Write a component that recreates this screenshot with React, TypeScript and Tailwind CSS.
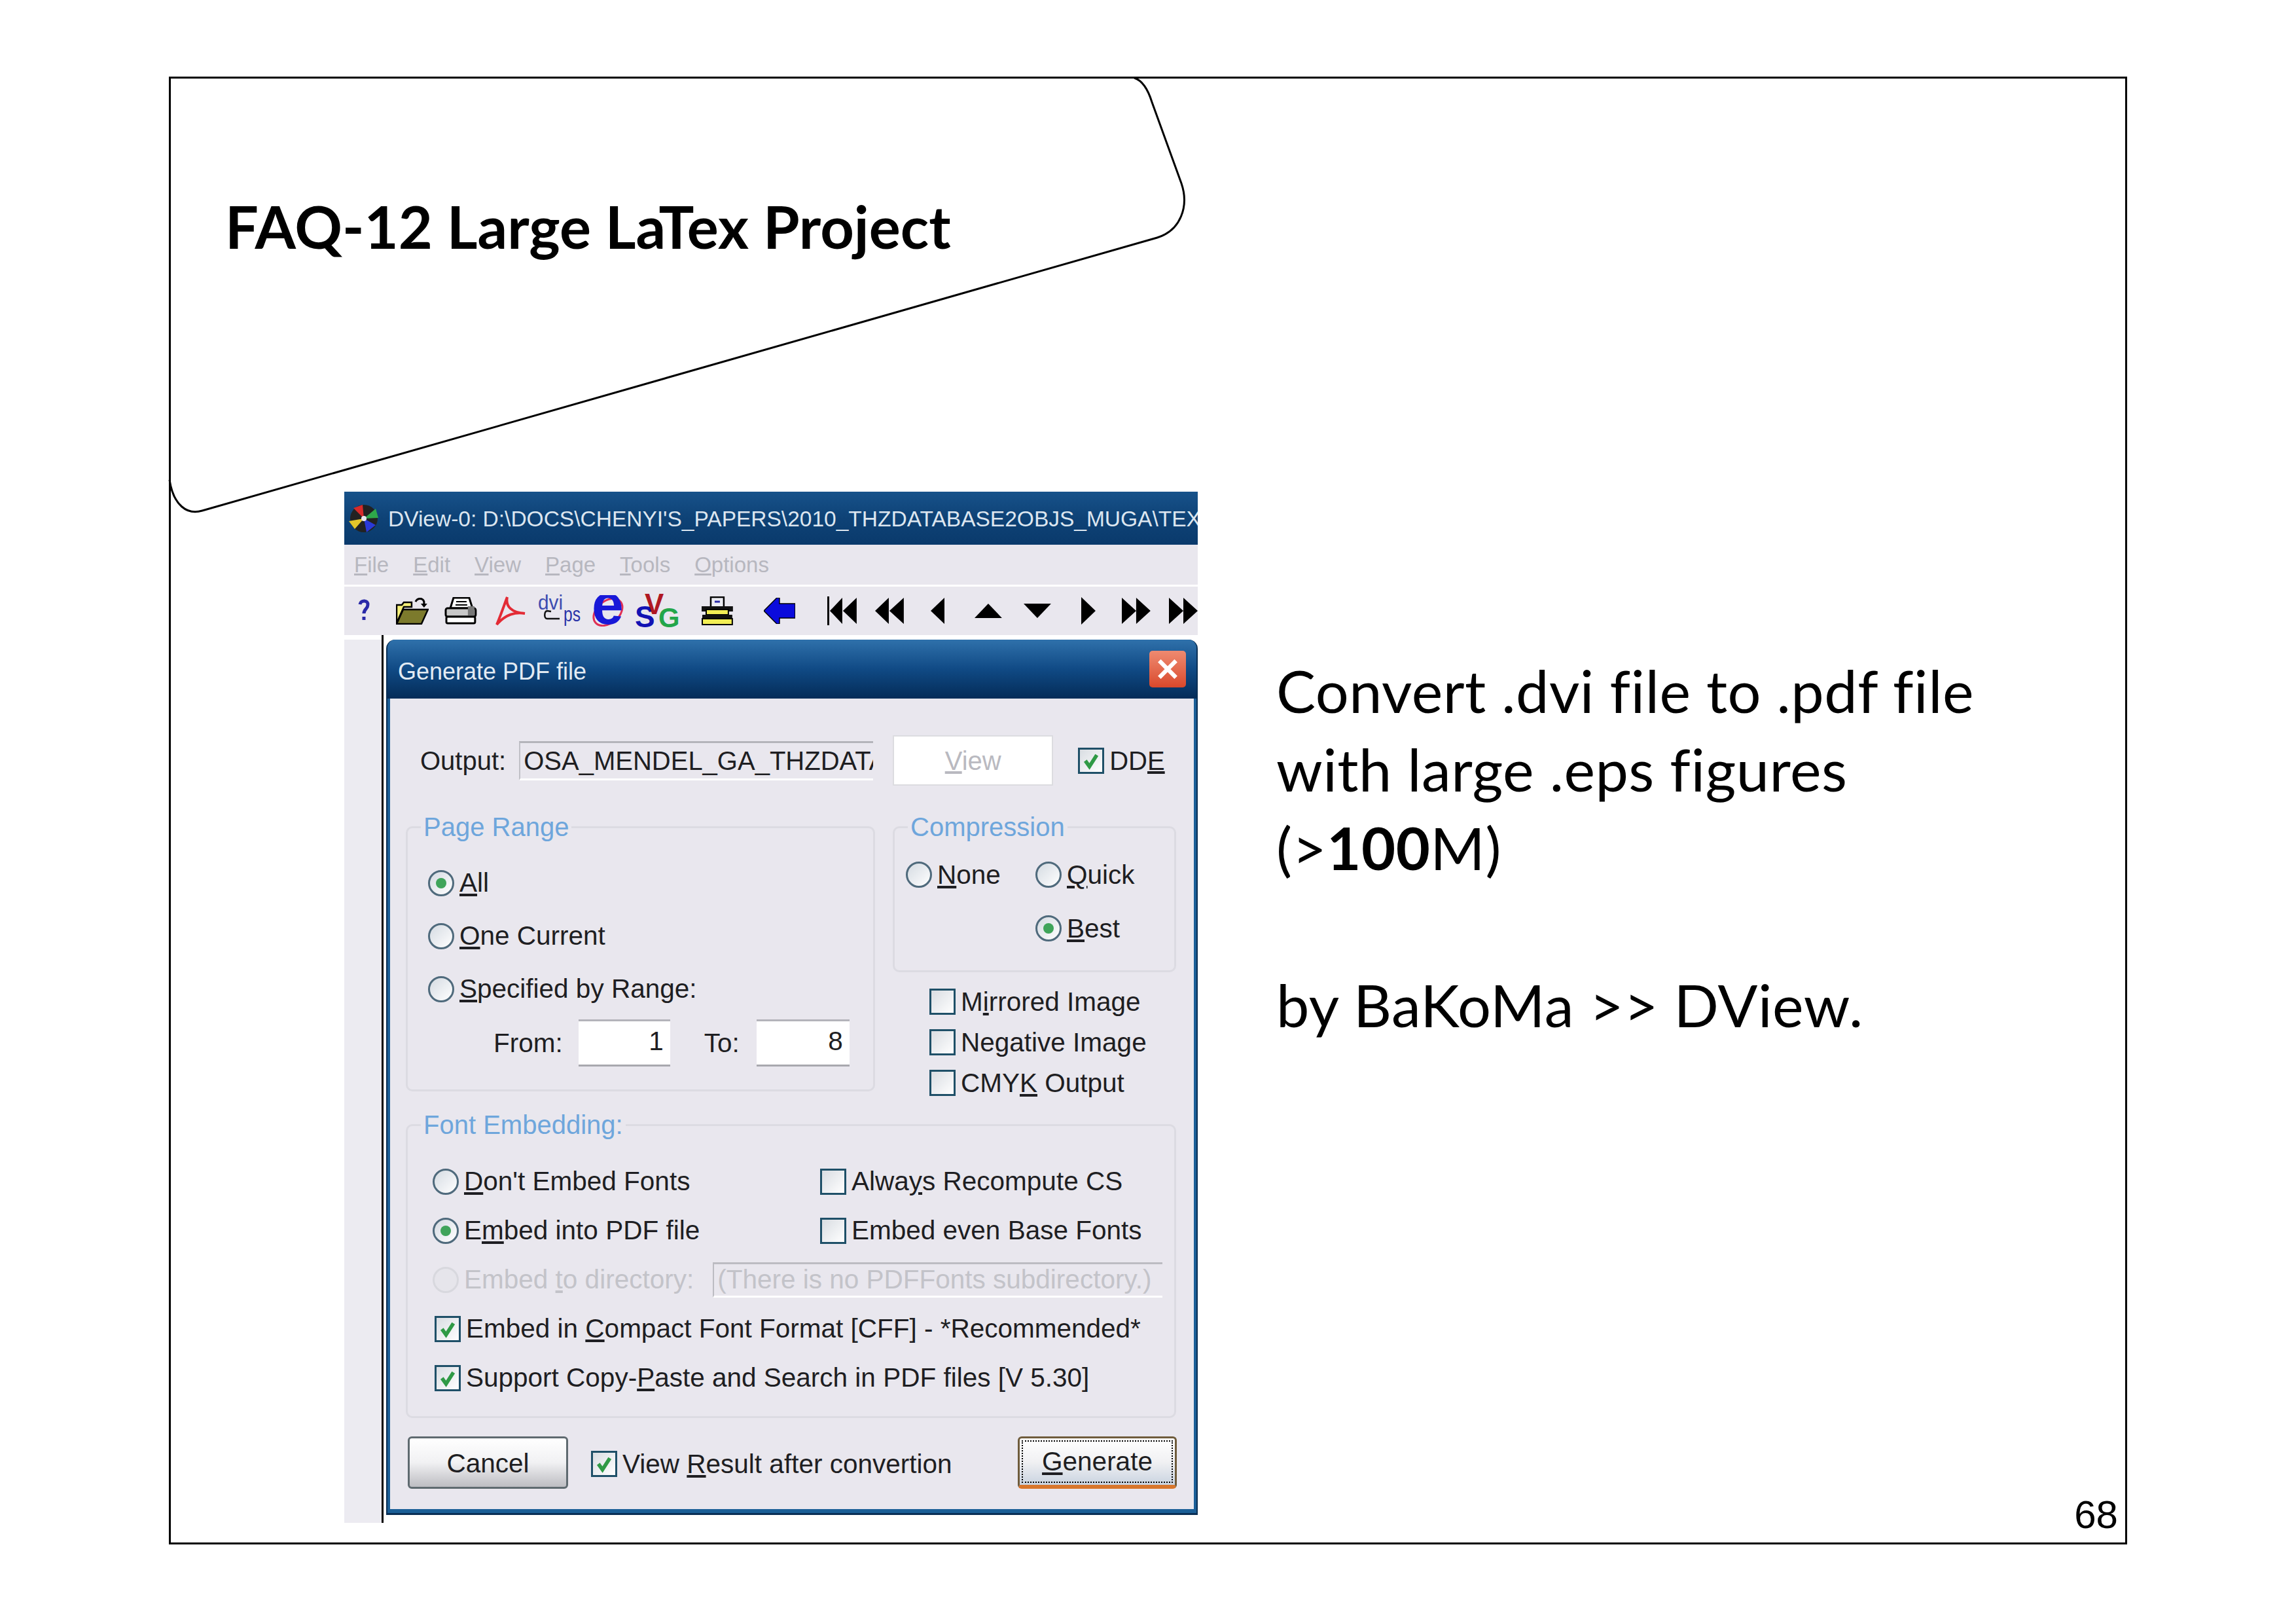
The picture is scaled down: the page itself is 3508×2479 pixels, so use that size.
import type { ReactNode } from "react";

const Radio = ({ on, off }: { on?: boolean; off?: boolean }) => (
  <span className={`flex h-[40px] w-[40px] shrink-0 items-center justify-center rounded-full border-[3px] ${off ? "border-[#d8d8de] bg-[#e6e5eb]" : "border-[#4f6a7c] bg-gradient-to-br from-[#d5dbe2] to-white"}`}>
    {on && <span className="h-[16px] w-[16px] rounded-full bg-[#3fa45a]" />}
  </span>
);

const Check = ({ on }: { on?: boolean }) => (
  <span className="flex h-[40px] w-[40px] shrink-0 items-center justify-center border-[3px] border-[#1f5068] bg-gradient-to-br from-[#d9dde2] to-white">
    {on && (
      <svg viewBox="0 0 24 24" className="h-[30px] w-[30px]">
        <path d="M5 12l5 7 9-14" fill="none" stroke="#2f9a45" strokeWidth="4.5" />
      </svg>
    )}
  </span>
);

const Item = ({ box, children, gray }: { box: ReactNode; children: ReactNode; gray?: boolean }) => (
  <div className={`flex items-center gap-[8px] whitespace-nowrap ${gray ? "text-[#c3c3c9]" : ""}`}>
    {box}
    <span>{children}</span>
  </div>
);

const Group = ({ title, className, inner, children }: { title: string; className: string; inner: string; children: ReactNode }) => (
  <fieldset className={`rounded-[10px] border-[3px] border-[#dcdbe2] ${className}`}>
    <legend className="ml-[20px] px-[4px] text-[40px] leading-[46px] text-[#6ea6dc]">{title}</legend>
    <div className={inner}>{children}</div>
  </fieldset>
);

function Toolbar() {
  return (
    <div className="flex h-[74px] items-center bg-[#e9e7ee]">
      {/* help */}
      <svg viewBox="0 0 20 40" className="ml-[20px] h-[40px] w-[20px]">
        <path d="M4 10c1-7 13-7 12 1 0 6-6 6-6 13" fill="none" stroke="#2a2aa8" strokeWidth="5" />
        <rect x="7.5" y="29" width="5" height="5" fill="#2a2aa8" />
      </svg>
      {/* open */}
      <svg viewBox="0 0 50 42" className="ml-[39px] h-[42px] w-[50px]">
        <path d="M1 12h8l3-4h12v7H12L1 40z" fill="#f5ef7a" stroke="#000" strokeWidth="2.5" />
        <path d="M1 41l10-22h38l-10 22z" fill="#7c7a2c" stroke="#000" strokeWidth="2.5" />
        <path d="M30 7c3-6 11-6 13 0v5" fill="none" stroke="#000" strokeWidth="3" />
        <path d="M38 10h10l-5 6z" fill="#000" />
      </svg>
      {/* print */}
      <svg viewBox="0 0 50 42" className="ml-[24px] h-[42px] w-[50px]">
        <path d="M14 1h24l5 16H9z" fill="#fff" stroke="#000" strokeWidth="3" />
        <path d="M18 7h16M17 12h18" stroke="#000" strokeWidth="2" />
        <rect x="2" y="17" width="46" height="13" rx="3" fill="#c8c8c8" stroke="#000" strokeWidth="3" />
        <rect x="3" y="30" width="44" height="10" rx="2" fill="#fff" stroke="#000" strokeWidth="3" />
        <rect x="36" y="14" width="10" height="14" fill="#777" />
      </svg>
      {/* pdf */}
      <svg viewBox="0 0 50 46" className="ml-[25px] h-[46px] w-[50px]">
        <path d="M21 2c-3 14 7 24 27 25-14-3-30 2-43 17 6-14 10-26 16-42z" fill="none" stroke="#e32b35" strokeWidth="4" />
      </svg>
      {/* dvi -> ps */}
      <svg viewBox="0 0 66 48" className="ml-[19px] h-[48px] w-[66px] overflow-visible font-['Liberation_Sans',sans-serif]">
        <text x="0" y="22" fontSize="32" textLength="38" lengthAdjust="spacingAndGlyphs" fill="#3c4cb0">dvi</text>
        <text x="39" y="40" fontSize="32" textLength="26" lengthAdjust="spacingAndGlyphs" fill="#2b34a8">ps</text>
        <path d="M33 36H14c-5 0-5-11 0-12l6 1" fill="none" stroke="#111" strokeWidth="2.5" />
      </svg>
      {/* browser */}
      <svg viewBox="0 0 52 48" className="ml-[15px] h-[48px] w-[52px] font-['Liberation_Sans',sans-serif]">
        <ellipse cx="26" cy="26" rx="25" ry="17" fill="none" stroke="#e02f55" strokeWidth="3" transform="rotate(-40 26 26)" />
        <text x="1" y="44" fontSize="88" fontWeight="700" fill="#1818d8">e</text>
      </svg>
      {/* svg */}
      <svg viewBox="0 0 68 54" className="ml-[15px] h-[54px] w-[68px] font-['Liberation_Sans',sans-serif]">
        <text x="0" y="52" fontSize="46" fontWeight="700" fill="#1212b4">S</text>
        <text x="15" y="32" fontSize="44" fontWeight="700" fill="#b01822">V</text>
        <text x="36" y="52" fontSize="42" fontWeight="700" fill="#23a64a">G</text>
      </svg>
      {/* typewriter */}
      <svg viewBox="0 0 50 44" className="ml-[33px] h-[44px] w-[50px]">
        <rect x="15" y="1" width="20" height="18" fill="#ececf2" stroke="#000" strokeWidth="2.5" />
        <path d="M21 8h8" stroke="#2a2aa8" strokeWidth="3" />
        <path d="M1 15h48v8H1z" fill="#111" />
        <path d="M8 20h34v8H8z" fill="#f2ee55" stroke="#000" strokeWidth="2" />
        <path d="M2 28h46v6H2z" fill="#111" />
        <path d="M2 34h46v9H2z" fill="#f2ee55" stroke="#000" strokeWidth="2" />
      </svg>
      {/* back */}
      <svg viewBox="0 0 48 40" className="ml-[46px] h-[40px] w-[48px]">
        <path d="M0 20L20 0h4v9h24v22H24v9h-4z" fill="#0b0bdc" stroke="#000" strokeWidth="1.5" />
      </svg>
      {/* first */}
      <svg viewBox="0 0 46 44" className="ml-[48px] h-[44px] w-[46px]">
        <path d="M1 0h3v44H1zM5 22L24 2v40zM25 22L46 2v40z" fill="#000" />
      </svg>
      <svg viewBox="0 0 44 44" className="ml-[28px] h-[44px] w-[44px]">
        <path d="M0 22L21 2v40zM22 22L44 2v40z" fill="#000" />
      </svg>
      <svg viewBox="0 0 22 44" className="ml-[41px] h-[44px] w-[22px]">
        <path d="M0 22L22 1v42z" fill="#000" />
      </svg>
      <svg viewBox="0 0 42 22" className="ml-[46px] h-[22px] w-[42px]">
        <path d="M21 0l21 22H0z" fill="#000" />
      </svg>
      <svg viewBox="0 0 42 22" className="ml-[33px] h-[22px] w-[42px]">
        <path d="M21 22L42 0H0z" fill="#000" />
      </svg>
      <svg viewBox="0 0 22 44" className="ml-[46px] h-[44px] w-[22px]">
        <path d="M22 22L0 1v42z" fill="#000" />
      </svg>
      <svg viewBox="0 0 44 44" className="ml-[40px] h-[44px] w-[44px]">
        <path d="M22 22L0 2v40zM44 22L22 2v40z" fill="#000" />
      </svg>
      <svg viewBox="0 0 44 44" className="ml-[28px] h-[44px] w-[44px] shrink-0">
        <path d="M22 22L0 2v40zM44 22L22 2v40z" fill="#000" />
      </svg>
    </div>
  );
}

function PdfDialog() {
  return (
    <div className="ml-[4px] mt-[7px] h-[1337px] w-[1240px] overflow-hidden rounded-t-[14px] border-b-[3px] border-l-[2px] border-r-[2px] border-[#0a2f55] bg-[#1b5f97]">
      <div className="flex h-[90px] items-center justify-between bg-gradient-to-b from-[#2f71ab] via-[#104a85] to-[#052c58] px-[16px]">
        <span className="pt-[8px] text-[36px] text-[#e3ebf3]">Generate PDF file</span>
        <span className="flex h-[56px] w-[56px] items-center justify-center rounded-[5px] bg-gradient-to-b from-[#ee8a70] to-[#d9472a]">
          <svg viewBox="0 0 24 24" className="h-[38px] w-[38px]">
            <path d="M4 4l16 16M20 4L4 20" stroke="#fff" strokeWidth="4" />
          </svg>
        </span>
      </div>

      <div className="mx-[4px] h-[1238px] bg-[#e9e7ee] pl-[24px] pt-[56px] text-[40.5px] leading-none text-[#1e1e22]">
        <div className="flex h-[77px] items-center pl-[22px] text-[40px]">
          <span>Output:</span>
          <div className="ml-[20px] flex h-[60px] w-[541px] items-center overflow-hidden whitespace-nowrap border-b-[3px] border-l-[2px] border-t-[3px] border-b-white border-l-[#c0c0c6] border-t-[#b4b4ba] pl-[5px]">
            OSA_MENDEL_GA_THZDATA
          </div>
          <div className="ml-[30px] flex h-[77px] w-[245px] items-center justify-center border-[2px] border-[#dcdce0] bg-white text-[#b9b9c0]">
            <span><u>V</u>iew</span>
          </div>
          <div className="ml-[38px]">
            <Item box={<Check on />}>DD<u>E</u></Item>
          </div>
        </div>

        <div className="mt-[40px] flex">
          <Group title="Page Range" className="h-[427px] w-[717px]" inner="pl-[31px] pt-[22px]">
            <div className="flex h-[81px] items-center"><Item box={<Radio on />}><u>A</u>ll</Item></div>
            <div className="flex h-[81px] items-center"><Item box={<Radio />}><u>O</u>ne Current</Item></div>
            <div className="flex h-[81px] items-center"><Item box={<Radio />}><u>S</u>pecified by Range:</Item></div>
            <div className="mt-[6px] flex h-[72px] items-center">
              <span className="ml-[100px]">From:</span>
              <div className="ml-[24px] h-[72px] w-[140px] border-b-[3px] border-t-[3px] border-b-[#a8a8ae] border-t-[#b4b4ba] bg-white pr-[10px] pt-[10px] text-right">1</div>
              <span className="ml-[52px]">To:</span>
              <div className="ml-[26px] h-[72px] w-[142px] border-b-[3px] border-t-[3px] border-b-[#a8a8ae] border-t-[#b4b4ba] bg-white pr-[10px] pt-[10px] text-right">8</div>
            </div>
          </Group>

          <div className="ml-[27px] w-[433px]">
            <Group title="Compression" className="h-[245px]" inner="pl-[17px] pt-[9px]">
              <div className="grid grid-cols-[198px_1fr] grid-rows-[82px_82px] items-center">
                <Item box={<Radio />}><u>N</u>one</Item>
                <Item box={<Radio />}><u>Q</u>uick</Item>
                <div />
                <Item box={<Radio on />}><u>B</u>est</Item>
              </div>
            </Group>
            <div className="ml-[56px] mt-[14px]">
              <div className="flex h-[62px] items-center"><Item box={<Check />}>M<u>i</u>rrored Image</Item></div>
              <div className="flex h-[62px] items-center"><Item box={<Check />}>Negative Image</Item></div>
              <div className="flex h-[62px] items-center"><Item box={<Check />}>CMY<u>K</u> Output</Item></div>
            </div>
          </div>
        </div>

        <Group title="Font Embedding:" className="mt-[10px] h-[471px] w-[1177px]" inner="pl-[38px] pt-[26px]">
          <div className="grid grid-cols-[592px_1fr] items-center">
            <div className="flex h-[75px] items-center"><Item box={<Radio />}><u>D</u>on't Embed Fonts</Item></div>
            <Item box={<Check />}>Alwa<u>y</u>s Recompute CS</Item>
            <div className="flex h-[75px] items-center"><Item box={<Radio on />}>E<u>m</u>bed into PDF file</Item></div>
            <Item box={<Check />}>Embed even Base Fonts</Item>
          </div>
          <div className="flex h-[75px] items-center">
            <Item gray box={<Radio off />}>Embed <u>t</u>o directory:</Item>
            <div className="ml-[29px] flex h-[54px] w-[687px] items-center overflow-hidden whitespace-nowrap border-b-[3px] border-l-[2px] border-t-[3px] border-b-white border-l-[#bcbcc2] border-t-[#bcbcc2] pl-[5px] text-[#c3c3c9]">
              (There is no PDFFonts subdirectory.)
            </div>
          </div>
          <div className="flex h-[75px] items-center pl-[3px]"><Item box={<Check on />}>Embed in <u>C</u>ompact Font Format [CFF] - *Recommended*</Item></div>
          <div className="flex h-[75px] items-center pl-[3px]"><Item box={<Check on />}>Support Copy-<u>P</u>aste and Search in PDF files [V 5.30]</Item></div>
        </Group>

        <div className="mt-[28px] flex h-[80px] w-[1178px] items-center">
          <div className="ml-[3px] flex h-[80px] w-[245px] items-center justify-center rounded-[6px] border-[3px] border-[#5f6a70] bg-gradient-to-b from-white via-[#f1f1f3] to-[#bdbdc2] pt-[2px]">Cancel</div>
          <div className="ml-[35px] pt-[4px]">
            <Item box={<Check on />}>View <u>R</u>esult after convertion</Item>
          </div>
          <div className="ml-auto h-[80px] w-[243px] rounded-[6px] border-[3px] border-b-[6px] border-[#6f5c3c] border-b-[#d8762c] bg-gradient-to-b from-white via-[#f1f1f3] to-[#c9d3e0] p-[3px]">
            <div className="flex h-full items-center justify-center border-[2px] border-dotted border-black"><span><u>G</u>enerate</span></div>
          </div>
        </div>
      </div>
    </div>
  );
}

function DViewWindow() {
  return (
    <div className="mb-[29px] w-[1304px] shrink-0 overflow-hidden font-['Liberation_Sans',sans-serif]">
      <div className="flex h-[81px] items-center bg-gradient-to-b from-[#17528a] via-[#0e4276] to-[#0a3a6c] pl-[6px]">
        <svg viewBox="0 0 48 44" className="h-[44px] w-[48px] shrink-0">
          <circle cx="24" cy="22" r="21" fill="#222" />
          <path d="M24 22L8 6l14-5z" fill="#d62a2a" />
          <path d="M24 22l18-15 4 14z" fill="#2ea84a" />
          <path d="M24 22l18 10-14 11z" fill="#2a3ad8" />
          <path d="M24 22L10 38l-9-12z" fill="#e3c52a" />
          <circle cx="24" cy="22" r="4" fill="#e9e7ee" />
        </svg>
        <span className="ml-[13px] whitespace-nowrap pt-[3px] text-[33.5px] text-[#dce6f0]">DView-0: D:\DOCS\CHENYI'S_PAPERS\2010_THZDATABASE2OBJS_MUGA\TEX</span>
      </div>
      <div className="flex h-[61px] items-center gap-[37px] bg-[#e9e7ee] pl-[15px] text-[33px] text-[#b7b7bf]">
        <span><u>F</u>ile</span>
        <span><u>E</u>dit</span>
        <span><u>V</u>iew</span>
        <span><u>P</u>age</span>
        <span><u>T</u>ools</span>
        <span><u>O</u>ptions</span>
      </div>
      <div className="h-[3px]" />
      <Toolbar />
      <div className="flex">
        <div className="mt-[7px] w-[57px] bg-[#ecebf1]" />
        <div className="w-[3px] bg-black" />
        <div className="pb-[12px]">
          <PdfDialog />
        </div>
      </div>
    </div>
  );
}

export default function App() {
  return (
    <div className="h-[2479px] w-[3508px] bg-white pl-[258px] pt-[117px]">
      <div className="relative flex h-[2242px] w-[2992px] flex-col border-[3px] border-black text-black">
        {/* tab shape of the title */}
        <svg className="absolute left-0 top-0 h-[700px] w-[1600px] overflow-visible" viewBox="0 0 1600 700" fill="none">
          <path d="M1472 -1C1485 3 1494 20 1499 36L1544 160C1556 195 1543 232 1507 243L48 660C25 667 4 652 -2 613" stroke="#000" strokeWidth="3" />
        </svg>

        <div className="h-[631px] pl-[83px] pt-[170px] font-['Lato',sans-serif] text-[90px] font-bold leading-[110px] [font-variant-ligatures:none]">
          FAQ-12 Large LaTex Project
        </div>

        <div className="flex flex-1 pl-[265px]">
          <DViewWindow />
          <div className="flex flex-1 flex-col pl-[120px] pr-[11px]">
            <div className="mt-[243px] font-['Lato',sans-serif] text-[90px] leading-[120px] tracking-[0.5px] [font-variant-ligatures:none]">
              <p>Convert .dvi file to .pdf file</p>
              <p>with large .eps figures</p>
              <p>(&gt;<b>100</b>M)</p>
              <p className="mt-[120px]">by BaKoMa &gt;&gt; DView.</p>
            </div>
            <div className="mb-[12px] mt-auto text-right font-['Liberation_Sans',sans-serif] text-[60px] leading-[60px]">68</div>
          </div>
        </div>
      </div>
    </div>
  );
}
